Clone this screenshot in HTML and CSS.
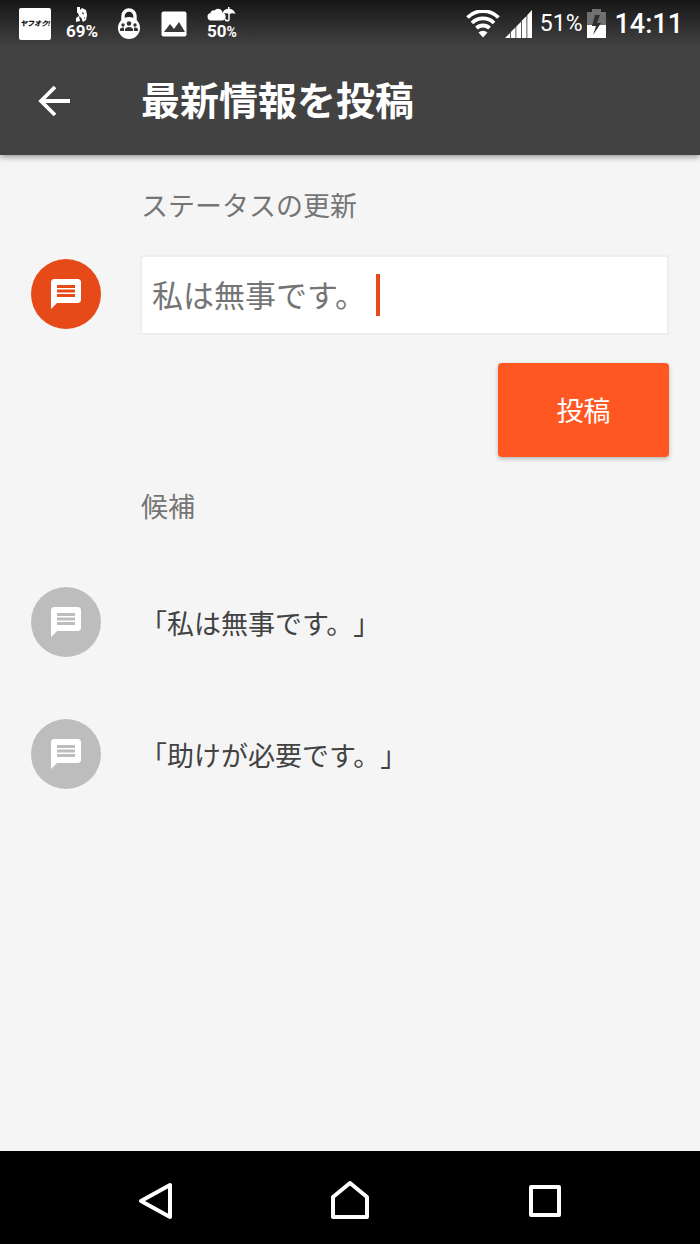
FILE: index.html
```html
<!DOCTYPE html>
<html lang="ja">
<head>
<meta charset="utf-8">
<meta name="viewport" content="width=device-width, initial-scale=1">
<title>最新情報を投稿</title>
<link rel="stylesheet" href="styles.css">
</head>
<body>
<svg class="sprite" aria-hidden="true">
  <symbol id="message" viewBox="0 0 24 24">
    <path d="M20 2H4c-1.1 0-1.99.9-1.99 2L2 22l4-4h14c1.1 0 2-.9 2-2V4c0-1.1-.9-2-2-2zm-2 12H6v-2h12v2zm0-3H6V9h12v2zm0-3H6V6h12v2z"/>
  </symbol>
</svg>
<div class="screen">
  <header class="top">
    <div class="status">
      <div class="status-left">
        <span class="shop">ヤフオク!</span>
        <span class="stat stat-power">
          <svg width="14" height="15" viewBox="0 0 14 15" fill="#fff"><path d="M2 0h3v3l2-2 4 2 1 5-1 5-3 2-2-4-2-2-1-3H2zM1 11l3-2 1 5-4 1z"/><path d="M7 5l2 1-1 2zM5 10l2 2-1 2zM9 10l1 1-1 1z" fill="#2b2b2b"/></svg>
          <span class="stat-text">69%</span>
        </span>
        <svg class="lock" width="24" height="32" viewBox="0 0 24 32">
          <path d="M6 12V8a6 6 0 0 1 12 0v4" fill="none" stroke="#fff" stroke-width="3.4"/>
          <circle cx="12" cy="20" r="11" fill="#fff"/>
          <g fill="#333"><circle cx="12" cy="15.500" r="2.300"/><circle cx="6" cy="17" r="1.700"/><circle cx="18" cy="17" r="1.700"/><path d="M8 23v-1.500c0-3.500 8-3.500 8 0V23zM3 23v-1.300c0-1.700 2-2.400 4-2v3.300zM21 23v-1.300c0-1.700-2-2.400-4-2v3.300z"/></g>
        </svg>
        <svg width="26" height="26" viewBox="0 0 26 26"><rect x="0.500" y="0.500" width="25" height="25" rx="2" fill="#fff"/><path d="M3 21l6-8 4 5 5-7 6 10z" fill="#383838"/></svg>
        <span class="stat">
          <svg width="30" height="15" viewBox="0 0 30 15"><path d="M4 13.500a3.800 3.800 0 0 1-.5-7.500 3 3 0 0 1 4-2.500 4.500 4.500 0 0 1 8 2.500 3.800 3.800 0 0 1 0 7.500z" fill="#fff"/><path d="M15 7c1-3 3-5 6-5.200V0h1.500v1.800c3 .2 5 2.200 6 5.200-2-1-4-1-6 0-2-1-5-1-7.500 0z" fill="#fff"/><path d="M22 6v6a1.800 1.800 0 0 1-3.600 0" fill="none" stroke="#fff" stroke-width="1.500"/></svg>
          <span class="stat-text stat-rain">50<small>%</small></span>
        </span>
      </div>
      <div class="status-right">
        <svg width="34" height="28" viewBox="0 0 34 28" fill="none" stroke="#fff" stroke-width="3.800"><path d="M1.500 7.500a22 22 0 0 1 31 0M6 13a15.600 15.600 0 0 1 22 0M10.500 18.200a9.200 9.200 0 0 1 13 0"/><path d="M17 27.500l-4.500-5a6.500 6.500 0 0 1 9 0z" fill="#fff" stroke="none"/></svg>
        <svg class="signal" width="27" height="28" viewBox="0 0 27 28" fill="#fff"><path d="M0 28l5-5v5zM5.800 22l4.700-4.700V28H5.800zM11.300 16.500l4.700-4.700V28h-4.700zM16.800 10.800l4.700-4.700V28h-4.700zM22.300 5L27 0v28h-4.700z"/></svg>
        <span class="percent">51%</span>
        <svg class="battery" width="19" height="30" viewBox="0 0 19 30"><path d="M0 3h5V0h9v3h5v13H0z" fill="#707070"/><path d="M0 16h19v13H0z" fill="#fff"/><path d="M13 6H8L5 17h4l-3 9 8-12h-4z" fill="#2f2f2f"/></svg>
        <time class="clock">14:11</time>
      </div>
    </div>
    <div class="toolbar">
      <button class="back" type="button" aria-label="戻る"><svg width="32" height="32" viewBox="0 0 32 32" fill="none" stroke="#fff" stroke-width="3.800"><path d="M32 16H3M17 2L3 16l14 14"/></svg></button>
      <h1 class="title">最新情報を投稿</h1>
    </div>
  </header>
  <main class="content">
    <form class="form">
      <label class="label" for="status-text">ステータスの更新</label>
      <div class="row">
        <span class="avatar avatar-active"><svg class="avatar-icon"><use href="#message"/></svg></span>
        <div class="field">
          <input class="input" id="status-text" type="text" value="私は無事です。">
          <span class="caret"></span>
        </div>
      </div>
      <button class="submit" type="button">投稿</button>
    </form>
    <h2 class="label">候補</h2>
    <div class="suggestions">
      <button class="suggestion" type="button"><span class="avatar"><svg class="avatar-icon"><use href="#message"/></svg></span><span>「私は無事です。」</span></button>
      <button class="suggestion" type="button"><span class="avatar"><svg class="avatar-icon"><use href="#message"/></svg></span><span>「助けが必要です。」</span></button>
    </div>
  </main>
  <nav class="nav">
    <button class="nav-button" type="button" aria-label="戻る"><svg width="40" height="40" viewBox="0 0 40 40"><path d="M35 4v32L6 20z"/></svg></button>
    <button class="nav-button" type="button" aria-label="ホーム"><svg width="40" height="40" viewBox="0 0 40 40"><path d="M3 36V16L20 2l17 14v20z"/></svg></button>
    <button class="nav-button" type="button" aria-label="アプリ履歴"><svg width="40" height="40" viewBox="0 0 40 40"><path d="M6 6h28v28H6z"/></svg></button>
  </nav>
</div>
</body>
</html>
```
FILE: styles.css
```css
* { box-sizing: border-box; }

body {
  margin: 0;
  background: #f5f5f5;
  color: #424242;
  font-family: Roboto, "Noto Sans CJK JP", sans-serif;
  text-spacing-trim: space-all;
}

button {
  border: 0;
  padding: 0;
  background: none;
  color: inherit;
  font: inherit;
}

svg { display: block; }

.sprite { position: absolute; width: 0; height: 0; }

.screen {
  display: flex;
  flex-direction: column;
  min-height: 100vh;
}

.top {
  background: #424242;
  color: #fff;
  box-shadow: 0 2px 6px rgba(0, 0, 0, 0.4);
}

.status {
  display: flex;
  justify-content: space-between;
  height: 47px;
  padding: 0 17px 0 19px;
  background: linear-gradient(#161616, #424242);
}

.status-left,
.status-right {
  display: flex;
  align-items: center;
}

.status-left { gap: 20px; }

.shop {
  width: 32px;
  height: 32px;
  border-radius: 2px;
  background: #fff;
  color: #111;
  font-size: 7px;
  font-style: italic;
  font-weight: 900;
  line-height: 32px;
  text-align: center;
  white-space: nowrap;
}

.stat {
  display: flex;
  flex-direction: column;
  align-items: center;
  width: 30px;
}

.stat-power { margin-left: -4px; }

.stat-text {
  font-family: Roboto, sans-serif;
  font-size: 17px;
  font-weight: 700;
  line-height: 18px;
}

.stat-rain small { font-size: 14px; }

.status-right { gap: 5px; }

.percent {
  margin-left: 3px;
  font-size: 23px;
}

.clock {
  margin-left: 3px;
  font-size: 27px;
  font-weight: 500;
}

.toolbar {
  display: flex;
  align-items: center;
  height: 108px;
  padding-left: 38px;
}

.back { width: 103px; }

.title {
  margin: 0;
  padding-top: 2px;
  font-size: 39px;
  font-weight: 700;
  line-height: 56px;
}

.content {
  flex: 1;
  padding: 32px 31px;
}

.form {
  display: flex;
  flex-direction: column;
  margin-bottom: 31px;
}

.label {
  margin: 0 0 0 110px;
  color: #757575;
  font-size: 27px;
  font-weight: 400;
  line-height: 40px;
}

.row {
  display: flex;
  align-items: center;
  gap: 39px;
  margin: 28px 0;
}

.avatar {
  display: flex;
  flex: none;
  align-items: center;
  justify-content: center;
  width: 70px;
  height: 70px;
  border-radius: 50%;
  background: #bdbdbd;
}

.avatar-active {
  margin-bottom: 3px;
  background: #e64a19;
}

.avatar-icon {
  width: 36px;
  height: 36px;
  fill: #fff;
}

.field {
  position: relative;
  flex: 1;
}

.input {
  display: block;
  width: 100%;
  height: 80px;
  padding: 0 10px 4px;
  border: 2px solid #eee;
  border-radius: 0;
  background: #fff;
  color: #757575;
  font: inherit;
  font-size: 31px;
}

.caret {
  position: absolute;
  top: 19px;
  left: 236px;
  width: 4px;
  height: 42px;
  background: #e64a19;
}

.submit {
  align-self: flex-end;
  width: 171px;
  height: 94px;
  padding-bottom: 2px;
  border-radius: 4px;
  background: #ff5722;
  box-shadow: 0 2px 4px rgba(0, 0, 0, 0.25);
  color: #fff;
  font-size: 27px;
}

.suggestions {
  display: flex;
  flex-direction: column;
  gap: 62px;
  margin-top: 59px;
}

.suggestion {
  display: flex;
  align-items: center;
  gap: 39px;
  font-size: 27px;
  text-align: left;
}

.nav {
  display: flex;
  justify-content: center;
  align-items: center;
  gap: 155px;
  height: 93px;
  padding-top: 6px;
  background: #000;
}

.nav svg {
  fill: none;
  stroke: #fff;
  stroke-width: 4;
  stroke-linejoin: round;
}
```
